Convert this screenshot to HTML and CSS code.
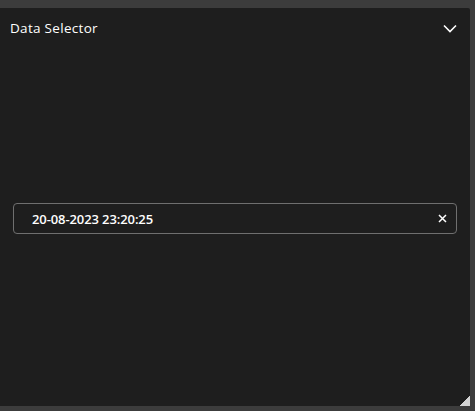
FILE: index.html
```html
<!DOCTYPE html>
<html>
<head>
<meta charset="utf-8">
<link rel="stylesheet" href="styles.css">
</head>
<body>
<div class="panel">
  <div class="header">
    <span class="title">Data Selector</span>
    <svg class="chevron" width="14" height="9" viewBox="0 0 14 9"><path d="M1 1.5 L7 7.5 L13 1.5" fill="none" stroke="#ffffff" stroke-width="1.6"/></svg>
  </div>
  <div class="content">
    <div class="field">
      <span class="value">20-08-2023 23:20:25</span>
      <svg class="clear" width="9" height="9" viewBox="0 0 9 9"><path d="M1 1 L8 8 M8 1 L1 8" stroke="#ffffff" stroke-width="1.5"/></svg>
    </div>
  </div>
  <div class="grip"></div>
</div>
</body>
</html>
```

FILE: styles.css
```css
html, body {
  margin: 0;
  padding: 0;
  background: #3c3c3c;
}
body {
  width: 475px;
  height: 411px;
  overflow: hidden;
  font-family: "Open Sans", "Noto Sans", sans-serif;
}
.panel {
  margin-top: 8px;
  width: 470px;
  height: 398px;
  background: #1e1e1e;
  border-top-right-radius: 2px;
  position: relative;
  display: flex;
  flex-direction: column;
}
.header {
  height: 40px;
  display: flex;
  align-items: center;
  justify-content: space-between;
  padding: 0 13px 0 10px;
}
.title {
  color: #ffffff;
  font-size: 13.5px;
  letter-spacing: 0.3px;
}
.chevron {
  display: block;
}
.content {
  padding: 155px 13px 0 13px;
}
.field {
  height: 29px;
  border: 1px solid #6f6f6f;
  border-radius: 4px;
  display: flex;
  align-items: center;
  justify-content: space-between;
  padding: 0 9px 0 18px;
}
.value {
  color: #ffffff;
  font-size: 13px;
  font-weight: 600;
  letter-spacing: -0.1px;
}
.clear {
  display: block;
}
.grip {
  position: absolute;
  right: 0;
  bottom: 0;
  width: 10px;
  height: 10px;
  background: linear-gradient(135deg, transparent 50%, #d4d4d4 50%);
}
```
